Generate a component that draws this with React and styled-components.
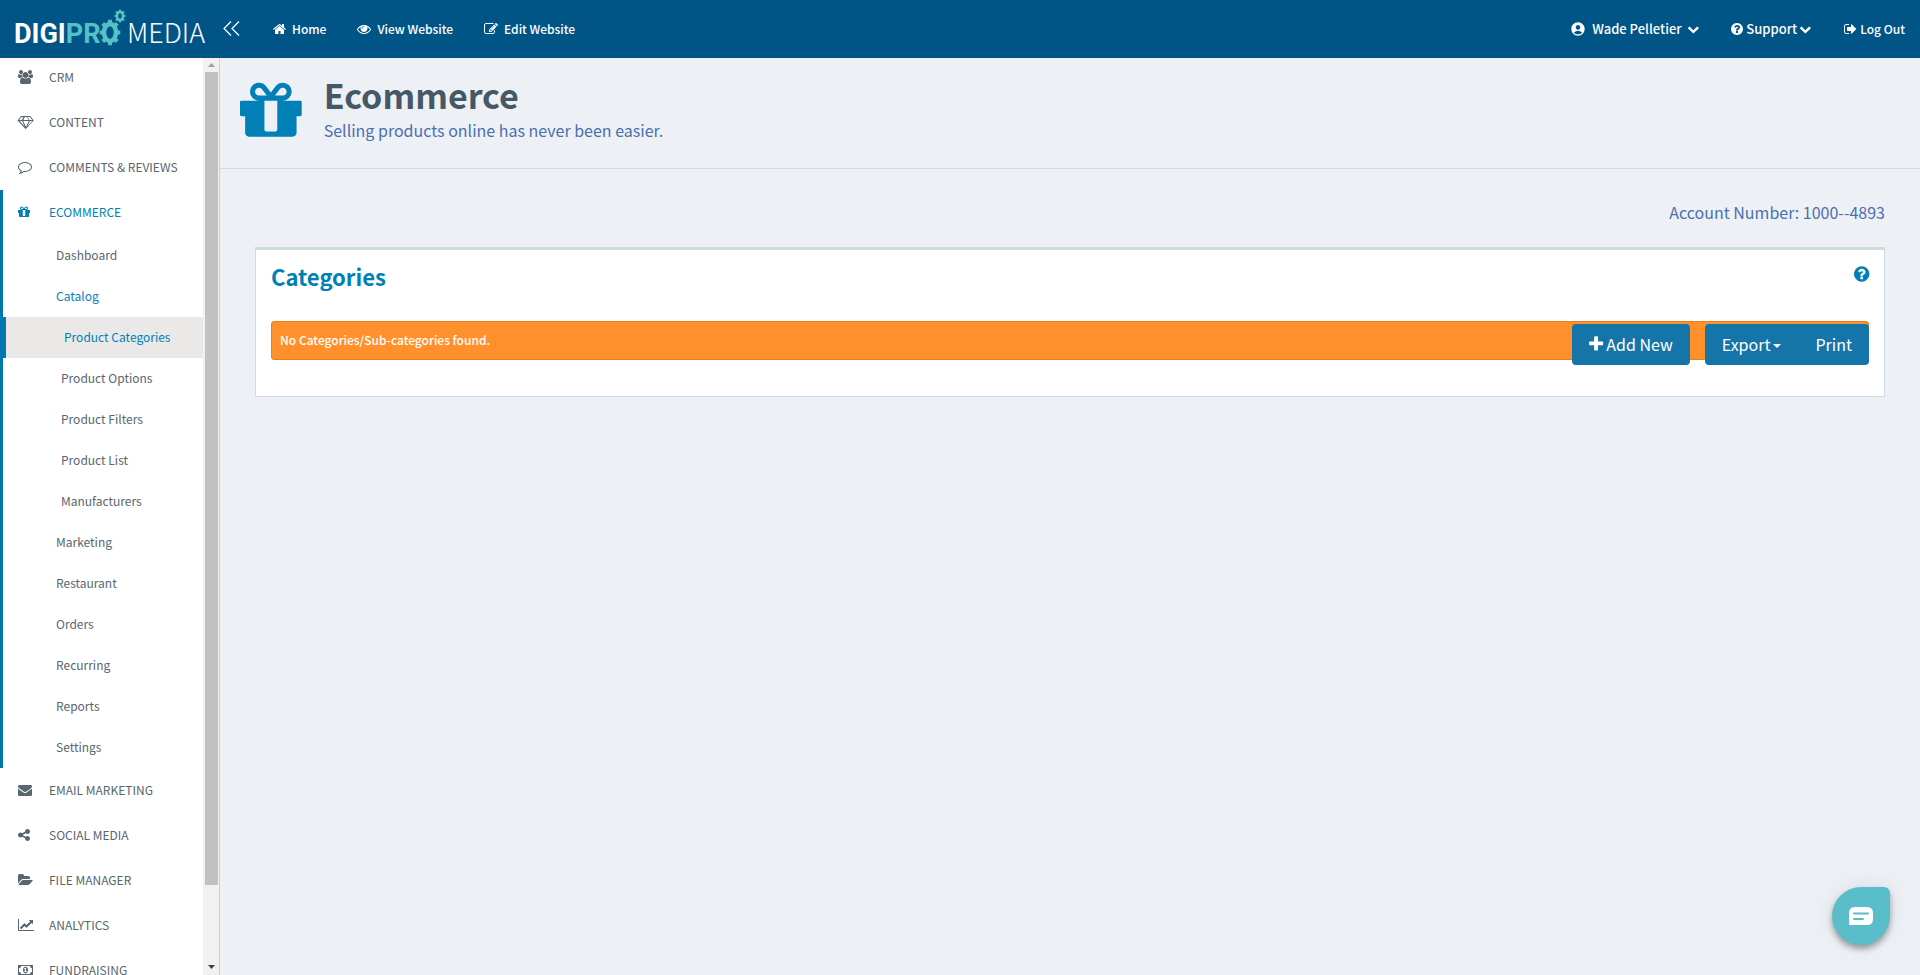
import React from 'react'
import styled, { createGlobalStyle } from 'styled-components'
import { MdAccountCircle } from 'react-icons/md'

const GlobalStyle = createGlobalStyle`
  * {
    box-sizing: border-box;
  }
  body {
    margin: 0;
    background: #edf1f6;
    color: #4b6fae;
    font-family: 'Noto Sans CJK SC', 'Open Sans', sans-serif;
    font-size: 12px;
    line-height: 20px;
  }
  a {
    color: inherit;
    text-decoration: none;
  }
  button {
    font: inherit;
    border: 0;
    cursor: pointer;
  }
`

// [left edge, width, path] on a 1792 tall grid
const icons = {
  home: [64, 1664, 'M1472 992v480q0 26-19 45t-45 19h-384v-384h-256v384h-384q-26 0-45-19t-19-45v-480q0-1 .5-3t.5-3l575-474 575 474q1 2 1 6zm223-69l-62 74q-8 9-21 11h-3q-13 0-21-7l-692-577-692 577q-12 8-24 7-13-2-21-11l-62-74q-8-10-7-23.5t11-21.5l719-599q32-26 76-26t76 26l244 204v-195q0-14 9-23t23-9h192q14 0 23 9t9 23v408l219 182q10 8 11 21.5t-7 23.5z'],
  eye: [0, 1792, 'M1664 960q-152-236-381-353 61 104 61 225 0 185-131.5 316.5t-316.5 131.5-316.5-131.5-131.5-316.5q0-121 61-225-229 117-381 353 133 205 333.5 326.5t434.5 121.5 434.5-121.5 333.5-326.5zm-720-384q0-20-14-34t-34-14q-125 0-214.5 89.5t-89.5 214.5q0 20 14 34t34 14 34-14 14-34q0-86 61-147t147-61q20 0 34-14t14-34zm848 384q0 34-20 69-140 230-376.5 368.5t-499.5 138.5-499.5-139-376.5-368q-20-35-20-69t20-69q140-229 376.5-368t499.5-139 499.5 139 376.5 368q20 35 20 69z'],
  edit: [0, 1792, 'M888 1184l116-116-152-152-116 116v56h96v96h56zm440-720q-16-16-33 1l-350 350q-17 17-1 33t33-1l350-350q17-17 1-33zm80 594v190q0 119-84.5 203.5t-203.5 84.5h-832q-119 0-203.5-84.5t-84.5-203.5v-832q0-119 84.5-203.5t203.5-84.5h832q63 0 117 25 15 7 18 23 3 17-9 29l-49 49q-14 14-32 8-23-6-45-6h-832q-66 0-113 47t-47 113v832q0 66 47 113t113 47h832q66 0 113-47t47-113v-126q0-13 9-22l64-64q15-15 35-7t20 29zm-96-738l288 288-672 672h-288v-288zm444 132l-92 92-288-288 92-92q28-28 68-28t68 28l152 152q28 28 28 68t-28 68z'],
  users: [0, 1920, 'M593 896q-162 5-265 128h-134q-82 0-138-40.5t-56-118.5q0-353 124-353 6 0 43.5 21t97.5 42.5 119 21.5q67 0 133-23-5 37-5 66 0 139 81 256zm1071 637q0 120-73 189.5t-194 69.5h-874q-121 0-194-69.5t-73-189.5q0-53 3.5-103.5t14-109 26.5-108.5 43-97.5 62-81 85.5-53.5 111.5-20q10 0 43 21.5t73 48 107 48 135 21.5 135-21.5 107-48 73-48 43-21.5q61 0 111.5 20t85.5 53.5 62 81 43 97.5 26.5 108.5 14 109 3.5 103.5zm-1024-1277q0 106-75 181t-181 75-181-75-75-181 75-181 181-75 181 75 75 181zm704 384q0 159-112.5 271.5t-271.5 112.5-271.5-112.5-112.5-271.5 112.5-271.5 271.5-112.5 271.5 112.5 112.5 271.5zm576 225q0 78-56 118.5t-138 40.5h-134q-103-123-265-128 81-117 81-256 0-29-5-66 66 23 133 23 59 0 119-21.5t97.5-42.5 43.5-21q124 0 124 353zm-128-609q0 106-75 181t-181 75-181-75-75-181 75-181 181-75 181 75 75 181z'],
  diamond: [0, 2048, 'M212 768l623 665-300-665h-323zm812 772l349-772h-698zm-538-900l204-384h-262l-288 384h346zm727 793l623-665h-323zm-530-793h682l-204-384h-274zm780 0h346l-288-384h-262zm141-486l384 512q14 18 13 41.5t-17 40.5l-960 1024q-18 20-47 20t-47-20l-960-1024q-16-17-17-40.5t13-41.5l384-512q18-26 51-26h1152q33 0 51 26z'],
  comment: [0, 1792, 'M896 384q-204 0-381.5 69.5t-282 187.5-104.5 255q0 112 71.5 213.5t201.5 175.5l87 50-27 96q-24 91-70 172 152-63 275-171l43-38 57 6q69 8 130 8 204 0 381.5-69.5t282-187.5 104.5-255-104.5-255-282-187.5-381.5-69.5zm896 512q0 174-120 321.5t-326 233-450 85.5q-70 0-145-8-198 175-460 242-49 14-114 22h-5q-15 0-27-10.5t-16-27.5v-1q-3-4-.5-12t2-10 4.5-9.5l6-9 7-8.5 8-9q7-8 31-34.5t34.5-38 31-39.5 32.5-51 27-59 26-76q-157-89-247.5-220t-90.5-281q0-174 120-321.5t326-233 450-85.5 450 85.5 326 233 120 321.5z'],
  gift: [128, 1536, 'M1056 1356v-716h-320v716q0 25 18 38.5t46 13.5h192q28 0 46-13.5t18-38.5zm-456-844h195l-126-161q-26-31-69-31-40 0-68 28t-28 68 28 68 68 28zm688-96q0-40-28-68t-68-28q-43 0-69 31l-125 161h194q40 0 68-28t28-68zm376 256v320q0 14-9 23t-23 9h-96v416q0 40-28 68t-68 28h-1088q-40 0-68-28t-28-68v-416h-96q-14 0-23-9t-9-23v-320q0-14 9-23t23-9h440q-93 0-158.5-65.5t-65.5-158.5 65.5-158.5 158.5-65.5q107 0 168 77l128 165 128-165q61-77 168-77 93 0 158.5 65.5t65.5 158.5-65.5 158.5-158.5 65.5h440q14 0 23 9t9 23z'],
  envelope: [0, 1792, 'M1792 710v794q0 66-47 113t-113 47h-1472q-66 0-113-47t-47-113v-794q44 49 101 87 362 246 497 345 57 42 92.5 65.5t94.5 48 110 24.5h2q51 0 110-24.5t94.5-48 92.5-65.5q170-123 498-345 57-39 100-87zm0-294q0 79-49 151t-122 123q-376 261-468 325-10 7-42.5 31t-54 38.5-52 32.5-57.5 27-50 9h-2q-23 0-50-9t-57.5-27-52-32.5-54-38.5-42.5-31q-91-64-262-182.5t-205-142.5q-62-42-117-115.5t-55-136.5q0-78 41.5-130t118.5-52h1472q65 0 112.5 47t47.5 113z'],
  share: [128, 1536, 'M1344 1024q133 0 226.5 93.5t93.5 226.5-93.5 226.5-226.5 93.5-226.5-93.5-93.5-226.5q0-12 2-34l-360-180q-92 86-218 86-133 0-226.5-93.5t-93.5-226.5 93.5-226.5 226.5-93.5q126 0 218 86l360-180q-2-22-2-34 0-133 93.5-226.5t226.5-93.5 226.5 93.5 93.5 226.5-93.5 226.5-226.5 93.5q-126 0-218-86l-360 180q2 22 2 34t-2 34l360 180q92-86 218-86z'],
  folder: [0, 1920, 'M1879 952q0 31-31 66l-336 396q-43 51-120.5 86.5t-143.5 35.5h-1088q-34 0-60.5-13t-26.5-43q0-31 31-66l336-396q43-51 120.5-86.5t143.5-35.5h1088q34 0 60.5 13t26.5 43zm-343-344v160h-832q-94 0-197 47.5t-164 119.5l-337 396-5 6q0-4-.5-12.5t-.5-12.5v-960q0-92 66-158t158-66h320q92 0 158 66t66 158v32h544q92 0 158 66t66 158z'],
  chart: [0, 2048, 'M2048 1536v128h-2048v-1536h128v1408h1920zm-128-1248v435q0 21-19.5 29.5t-35.5-7.5l-121-121-633 633q-10 10-23 10t-23-10l-233-233-416 416-192-192 585-585q10-10 23-10t23 10l233 233 464-464-121-121q-16-16-7.5-35.5t29.5-19.5h435q14 0 23 9t9 23z'],
  money: [0, 1920, 'M768 1152h384v-96h-128v-448h-114l-148 137 77 80q42-37 55-57h2v288h-128v96zm512-256q0 70-21 142t-59.5 134-101.5 101-138 39-138-39-101.5-101-59.5-134-21-142 21-142 59.5-134 101.5-101 138-39 138 39 101.5 101 59.5 134 21 142zm512 256v-512q-106 0-181-75t-75-181h-1152q0 106-75 181t-181 75v512q106 0 181 75t75 181h1152q0-106 75-181t181-75zm128-832v1152q0 26-19 45t-45 19h-1792q-26 0-45-19t-19-45v-1152q0-26 19-45t45-19h1792q26 0 45 19t19 45z'],
  question: [128, 1536, 'M1024 1376v-192q0-14-9-23t-23-9h-192q-14 0-23 9t-9 23v192q0 14 9 23t23 9h192q14 0 23-9t9-23zm256-672q0-88-55.5-163t-138.5-116-170-41q-243 0-371 213-15 24 8 42l132 100q7 6 19 6 16 0 25-12 53-68 86-92 34-24 86-24 48 0 85.5 26t37.5 59q0 38-20 61t-68 45q-63 28-115.5 86.5t-52.5 125.5v36q0 14 9 23t23 9h192q14 0 23-9t9-23q0-19 21.5-49.5t54.5-49.5q32-18 49-28.5t46-35 44.5-48 28-60.5 12.5-81zm384 192q0 209-103 385.5t-279.5 279.5-385.5 103-385.5-103-279.5-279.5-103-385.5 103-385.5 279.5-279.5 385.5-103 385.5 103 279.5 279.5 103 385.5z'],
  signout: [64, 1568, 'M704 1440q0 4 1 20t.5 26.5-3 23.5-10 19.5-20.5 6.5h-320q-119 0-203.5-84.5t-84.5-203.5v-704q0-119 84.5-203.5t203.5-84.5h320q13 0 22.5 9.5t9.5 22.5q0 4 1 20t.5 26.5-3 23.5-10 19.5-20.5 6.5h-320q-66 0-113 47t-47 113v704q0 66 47 113t113 47h312l11.5 1 11.5 3 8 5.5 7 9 2 13.5zm928-544q0 26-19 45l-544 544q-19 19-45 19t-45-19-19-45v-288h-448q-26 0-45-19t-19-45v-384q0-26 19-45t45-19h448v-288q0-26 19-45t45-19 45 19l544 544q19 19 19 45z'],
  down: [90, 1612, 'M1683 808l-742 741q-19 19-45 19t-45-19l-742-741q-19-19-19-45.5t19-45.5l166-165q19-19 45-19t45 19l531 531 531-531q19-19 45-19t45 19l166 165q19 19 19 45.5t-19 45.5z'],
  plus: [192, 1408, 'M1600 736v192q0 40-28 68t-68 28h-416v416q0 40-28 68t-68 28h-192q-40 0-68-28t-28-68v-416h-416q-40 0-68-28t-28-68v-192q0-40 28-68t68-28h416v-416q0-40 28-68t68-28h192q40 0 68 28t28 68v416h416q40 0 68 28t28 68z']
}

const Icon = ({ name, size = 14 }) => {
  const [left, width, d] = icons[name]
  return (
    <svg
      width={(width / 1792) * size}
      height={size}
      viewBox={`${left} 0 ${width} 1792`}
      fill="currentColor"
      overflow="visible"
      aria-hidden="true"
    >
      <path d={d} />
    </svg>
  )
}

const Page = styled.div`
  display: flex;
  flex-direction: column;
  height: 100vh;
  overflow: hidden;
`

const TopBar = styled.header`
  display: flex;
  align-items: center;
  flex: none;
  height: 58px;
  padding: 0 15px 0 14px;
  background: #005587;
  color: #fff;
  z-index: 1;
`

const LogoLink = styled.a`
  display: block;
  height: 58px;
`

const CollapseButton = styled.button`
  display: flex;
  padding: 0 0 2px;
  margin: 0 33px 0 17px;
  background: none;
  color: #fff;
`

const TopLinks = styled.nav`
  display: flex;
  gap: ${({ $right }) => ($right ? 33 : 31)}px;
  margin-left: ${({ $right }) => ($right ? 'auto' : '0')};
`

const TopLink = styled.a`
  display: flex;
  align-items: center;
  gap: ${({ $gap }) => $gap || 6}px;
  font-size: ${({ $large }) => ($large ? 13 : 12)}px;
  font-weight: 500;
  white-space: nowrap;
`

const Body = styled.div`
  display: flex;
  flex: 1;
  min-height: 0;
`

const SideBar = styled.aside`
  display: flex;
  flex: none;
  width: 220px;
  background: #fff;
  border-right: 1px solid #cdd0d4;
`

const Menu = styled.ul`
  flex: 1;
  list-style: none;
  padding: 0;
  margin: -3px 0 0;
  color: #58666e;
`

const MenuGroup = styled.li`
  border-left: 3px solid ${({ $active }) => ($active ? '#0077ad' : 'transparent')};
`

const MenuLink = styled.a`
  display: flex;
  align-items: center;
  height: 45px;
  padding: 0 0 2px 15px;
  color: ${({ $active }) => ($active ? '#0080b7' : 'inherit')};

  svg {
    flex: none;
  }
`

const MenuIcon = styled.span`
  display: flex;
  width: 31px;
`

const SubMenu = styled.ul`
  list-style: none;
  padding: 0;
  margin: 0;
`

const SubLink = styled.a`
  display: flex;
  align-items: center;
  height: 41px;
  padding: 0 0 2px ${({ $deep }) => ($deep ? 58 : 53)}px;
  color: ${({ $active }) => ($active ? '#0080b7' : 'inherit')};

  &[aria-current] {
    background: #ebe9e8;
    border-left: 3px solid #0077ad;
  }
`

const ScrollBar = styled.div`
  display: flex;
  flex-direction: column;
  flex: none;
  width: 16px;
  padding: 0 1px 0 2px;
  background: #f1f1f1;
`

const ScrollArrow = styled.div`
  display: flex;
  align-items: center;
  justify-content: center;
  height: ${({ $down }) => ($down ? 17 : 14)}px;
  color: ${({ $down }) => ($down ? '#404040' : '#a0a0a0')};
`

const ScrollThumb = styled.div`
  flex: 813;
  background: #c1c1c1;
`

const ScrollRest = styled.div`
  flex: 73;
`

const Main = styled.main`
  flex: 1;
  min-width: 0;
  font-size: 16px;
`

const PageHead = styled.div`
  display: flex;
  gap: 22px;
  height: 111px;
  padding: 17px 20px 0;
  border-bottom: 1px solid #d3d9de;
  color: #0080b7;
`

const PageTitle = styled.h1`
  margin: 0;
  font-size: 34px;
  font-weight: 700;
  line-height: 40px;
  color: #465866;
`

const PageLead = styled.p`
  margin: 0;
  line-height: 30px;
  color: #4b6fae;
`

const Content = styled.div`
  padding: 31px 35px;
`

const Account = styled.p`
  margin: 0 0 23px;
  line-height: 24px;
  text-align: right;
`

const Panel = styled.section`
  padding: 15px 15px 36px;
  background: #fff;
  border: 1px solid #cfdbe2;
  border-top-width: 3px;
`

const PanelHead = styled.div`
  display: flex;
  align-items: flex-start;
  justify-content: space-between;
  height: 56px;
`

const PanelTitle = styled.h2`
  margin: 0;
  font-size: 22px;
  font-weight: 700;
  line-height: 22px;
  color: #0080b7;
`

const HelpButton = styled.button`
  display: flex;
  padding: 0;
  background: none;
  color: #0080b7;
`

const AlertRow = styled.div`
  position: relative;
`

const Alert = styled.div`
  padding: 8px 8px 9px;
  border: 1px solid #e8801f;
  border-radius: 3px;
  background: #ff902b;
  color: #fff;
  font-size: 12px;
  font-weight: 500;
  line-height: 20px;
`

const Actions = styled.div`
  position: absolute;
  top: 3px;
  right: 0;
  display: flex;
  gap: 15px;
`

const ButtonGroup = styled.div`
  display: flex;
  border-radius: 4px;
  overflow: hidden;
`

const ActionButton = styled.button`
  display: flex;
  align-items: center;
  gap: 3px;
  height: 41px;
  padding: 0 17px 2px;
  background: #1675a8;
  color: #fff;
`

const Caret = styled.span`
  margin-top: 4px;
  border: 4px solid transparent;
  border-top-color: currentColor;
  border-bottom: 0;
`

const ChatButton = styled.button`
  position: fixed;
  right: 30px;
  bottom: 30px;
  display: flex;
  align-items: center;
  justify-content: center;
  width: 58px;
  height: 58px;
  padding: 0;
  border-radius: 50% 6px 50% 50%;
  background: #59bec9;
  box-shadow: 0 4px 6px rgba(0, 0, 0, 0.35), 0 0 24px rgba(0, 0, 0, 0.08);
`

const Gear = ({ cx, cy, rx, ry, stroke, tooth }) => (
  <g fill="#53c1c6">
    {[0, 45, 90, 135, 180, 225, 270, 315].map(a => {
      const rad = (a * Math.PI) / 180
      return (
        <rect
          key={a}
          x={-tooth / 2}
          y={-tooth / 2}
          width={tooth}
          height={tooth}
          transform={`translate(${cx + (rx + stroke / 2) * Math.cos(rad)} ${cy + (ry + stroke / 2) * Math.sin(rad)}) rotate(${a})`}
        />
      )
    })}
    <ellipse cx={cx} cy={cy} rx={rx} ry={ry} fill="none" stroke="#53c1c6" strokeWidth={stroke} />
  </g>
)

const LogoText = styled.text`
  font-family: ${({ $light }) => ($light ? "'Noto Sans CJK SC'" : 'Roboto')}, sans-serif;
  font-size: 27px;
  font-weight: ${({ $light }) => ($light ? 300 : 700)};
`

const Logo = () => (
  <svg width="192" height="58" role="img" aria-label="DigiPro Media">
    <LogoText x="0" y="43" fill="#fff">DIGI<tspan fill="#53c1c6">PR</tspan></LogoText>
    <Gear cx={96} cy={32.5} rx={6} ry={8.5} stroke={4.5} tooth={4} />
    <Gear cx={106} cy={16} rx={3} ry={4} stroke={2.4} tooth={2.4} />
    <LogoText x="113" y="43" fill="#fff" $light>MEDIA</LogoText>
  </svg>
)

const sections = [
  { label: 'CRM', icon: 'users' },
  { label: 'CONTENT', icon: 'diamond' },
  { label: 'COMMENTS & REVIEWS', icon: 'comment' },
  {
    label: 'ECOMMERCE',
    icon: 'gift',
    items: [
      { label: 'Dashboard' },
      { label: 'Catalog', active: true },
      { label: 'Product Categories', deep: true, active: true, current: true },
      { label: 'Product Options', deep: true },
      { label: 'Product Filters', deep: true },
      { label: 'Product List', deep: true },
      { label: 'Manufacturers', deep: true },
      { label: 'Marketing' },
      { label: 'Restaurant' },
      { label: 'Orders' },
      { label: 'Recurring' },
      { label: 'Reports' },
      { label: 'Settings' }
    ]
  },
  { label: 'EMAIL MARKETING', icon: 'envelope' },
  { label: 'SOCIAL MEDIA', icon: 'share' },
  { label: 'FILE MANAGER', icon: 'folder' },
  { label: 'ANALYTICS', icon: 'chart' },
  { label: 'FUNDRAISING', icon: 'money' }
]

const SideNav = () => (
  <SideBar>
    <Menu>
      {sections.map(({ label, icon, items }) => (
        <MenuGroup key={label} $active={!!items}>
          <MenuLink href="#" $active={!!items}>
            <MenuIcon><Icon name={icon} /></MenuIcon>
            {label}
          </MenuLink>
          {items && (
            <SubMenu>
              {items.map(item => (
                <li key={item.label}>
                  <SubLink
                    href="#"
                    $deep={item.deep}
                    $active={item.active}
                    aria-current={item.current ? 'page' : undefined}
                  >
                    {item.label}
                  </SubLink>
                </li>
              ))}
            </SubMenu>
          )}
        </MenuGroup>
      ))}
    </Menu>
    <ScrollBar aria-hidden="true">
      <ScrollArrow>
        <svg width="7" height="4" fill="currentColor"><path d="M0 4L3.5 0L7 4z" /></svg>
      </ScrollArrow>
      <ScrollThumb />
      <ScrollRest />
      <ScrollArrow $down>
        <svg width="7" height="4" fill="currentColor"><path d="M0 0L3.5 4L7 0z" /></svg>
      </ScrollArrow>
    </ScrollBar>
  </SideBar>
)

const App = () => {
  return (
    <Page>
      <GlobalStyle />
      <TopBar>
        <LogoLink href="#"><Logo /></LogoLink>
        <CollapseButton aria-label="Collapse menu">
          <svg width="17" height="15" fill="none" stroke="currentColor" strokeWidth="1.2">
            <path d="M8 .5L1 7.500L8 14.500M16 .5L9 7.500L16 14.500" />
          </svg>
        </CollapseButton>
        <TopLinks>
          <TopLink href="#"><Icon name="home" />Home</TopLink>
          <TopLink href="#"><Icon name="eye" />View Website</TopLink>
          <TopLink href="#"><Icon name="edit" />Edit Website</TopLink>
        </TopLinks>
        <TopLinks $right>
          <TopLink href="#" $large><MdAccountCircle size={16} />Wade Pelletier <Icon name="down" size={12} /></TopLink>
          <TopLink href="#" $large $gap={3}><Icon name="question" />Support<Icon name="down" size={12} /></TopLink>
          <TopLink href="#" $gap={4}><Icon name="signout" />Log Out</TopLink>
        </TopLinks>
      </TopBar>
      <Body>
        <SideNav />
        <Main>
          <PageHead>
            <Icon name="gift" size={72} />
            <div>
              <PageTitle>Ecommerce</PageTitle>
              <PageLead>Selling products online has never been easier.</PageLead>
            </div>
          </PageHead>
          <Content>
            <Account>Account Number: 1000--4893</Account>
            <Panel>
              <PanelHead>
                <PanelTitle>Categories</PanelTitle>
                <HelpButton aria-label="Help"><Icon name="question" size={18} /></HelpButton>
              </PanelHead>
              <AlertRow>
                <Alert role="alert">No Categories/Sub-categories found.</Alert>
                <Actions>
                  <ButtonGroup>
                    <ActionButton><Icon name="plus" size={18} />Add New</ActionButton>
                  </ButtonGroup>
                  <ButtonGroup>
                    <ActionButton>Export<Caret /></ActionButton>
                    <ActionButton>Print</ActionButton>
                  </ButtonGroup>
                </Actions>
              </AlertRow>
            </Panel>
          </Content>
        </Main>
      </Body>
      <ChatButton aria-label="Open chat">
        <svg width="24" height="18">
          <path d="M0 18V6Q0 0 6 0H18Q24 0 24 6V12Q24 18 18 18z" fill="#fff" />
          <path d="M5 6.500H19M5 12H14" stroke="#59bec9" strokeWidth="2" strokeLinecap="round" />
        </svg>
      </ChatButton>
    </Page>
  )
}

export default App
